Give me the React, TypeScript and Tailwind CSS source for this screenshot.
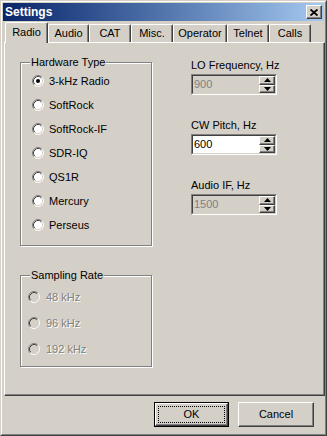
import React from "react";

const tabs = [
  { name: "Radio", w: "w-[43px]" },
  { name: "Audio", w: "w-[41px]" },
  { name: "CAT", w: "w-[42px]" },
  { name: "Misc.", w: "w-[42px]" },
  { name: "Operator", w: "w-[54px]" },
  { name: "Telnet", w: "w-[42px]" },
  { name: "Calls", w: "w-[42px]" },
];

const hardware = ["3-kHz Radio", "SoftRock", "SoftRock-IF", "SDR-IQ", "QS1R", "Mercury", "Perseus"];
const rates = ["48 kHz", "96 kHz", "192 kHz"];

// classic 3d bevels
const raised =
  "border border-t-white border-l-white border-b-[#404040] border-r-[#404040] shadow-[inset_-1px_-1px_0_#808080]";

function RadioDot({ checked, disabled }: { checked?: boolean; disabled?: boolean }) {
  return (
    <svg width="12" height="12" viewBox="0 0 12 12" className="shrink-0">
      <circle cx="6" cy="6" r="5" fill={disabled ? "#d4d0c8" : "#fff"} />
      <path d="M2.11 9.89A5.5 5.5 0 0 1 9.89 2.11" fill="none" stroke="#808080" />
      <path d="M9.89 2.11A5.5 5.5 0 0 1 2.11 9.89" fill="none" stroke="#fff" />
      <path d="M2.82 9.18A4.5 4.5 0 0 1 9.18 2.82" fill="none" stroke="#404040" />
      <path d="M9.18 2.82A4.5 4.5 0 0 1 2.82 9.18" fill="none" stroke="#d4d0c8" />
      {checked && <circle cx="6" cy="6" r="2" fill="#000" />}
    </svg>
  );
}

function Spin() {
  return (
    <div className="flex flex-col w-[16px] h-full">
      <div className={`flex-1 flex items-center justify-center bg-[#d4d0c8] ${raised}`}>
        <svg width="7" height="4" viewBox="0 0 7 4">
          <path d="M3.5 0L7 4H0z" fill="#000" />
        </svg>
      </div>
      <div className={`flex-1 flex items-center justify-center bg-[#d4d0c8] ${raised}`}>
        <svg width="7" height="4" viewBox="0 0 7 4">
          <path d="M0 0H7L3.5 4z" fill="#000" />
        </svg>
      </div>
    </div>
  );
}

function SpinBox({ label, value, disabled, first }: { label: string; value: string; disabled?: boolean; first?: boolean }) {
  return (
    <div className={first ? "flex flex-col mt-[16px]" : "flex flex-col mt-[24px]"}>
      <span className="h-[13px] leading-[13px]">{label}</span>
      <div className="mt-[2px] w-[86px] h-[21px] border border-t-[#808080] border-l-[#808080] border-b-white border-r-white">
        <div
          className={
            disabled
              ? "h-full flex border border-t-[#404040] border-l-[#404040] border-b-[#d4d0c8] border-r-[#d4d0c8] bg-[#d4d0c8] text-[#808080]"
              : "h-full flex border border-t-[#404040] border-l-[#404040] border-b-[#d4d0c8] border-r-[#d4d0c8] bg-white text-black"
          }
        >
          <span className="flex-1 pl-[1px] leading-[17px]">{value}</span>
          <Spin />
        </div>
      </div>
    </div>
  );
}

export default function App() {
  return (
    <div className="w-[327px] h-[436px] bg-[#d4d0c8] border border-t-[#d4d0c8] border-l-[#d4d0c8] border-b-[#404040] border-r-[#404040] font-['Liberation_Sans',Arial,sans-serif] text-[11px] text-black">
      <div className="h-full flex flex-col border border-t-white border-l-white border-b-[#808080] border-r-[#808080]">
        {/* Title bar */}
        <div className="mt-[1px] mx-[1px] h-[18px] flex items-center pl-[2px] pr-[2px] bg-gradient-to-r from-[#0a246a] to-[#a6caf0]">
          <span className="flex-1 text-white font-bold text-[12px] leading-[18px]">Settings</span>
          <div className={`w-[16px] h-[14px] flex items-center justify-center bg-[#d4d0c8] ${raised}`}>
            <svg width="8" height="7" viewBox="0 0 8 7">
              <path d="M0.5 0.5L7.5 6.5M7.5 0.5L0.5 6.5" stroke="#000" strokeWidth="1.8" fill="none" />
            </svg>
          </div>
        </div>

        {/* Tabs */}
        <div className="mt-[1px] h-[20px] flex items-end pl-[3px]">
          {tabs.map((t, i) =>
            i === 0 ? (
              <div
                key={t.name}
                className={`${t.w} relative z-10 h-[21px] -mb-px flex items-center justify-center pb-[1px] bg-[#d4d0c8] border-l border-t border-r border-l-white border-t-white border-r-[#404040] rounded-t-[2px] shadow-[inset_-1px_0_0_#808080]`}
              >
                {t.name}
              </div>
            ) : (
              <div
                key={t.name}
                className={`${t.w} h-[18px] flex items-center justify-center bg-[#d4d0c8] border-l border-t border-r border-l-white border-t-white border-r-[#404040] rounded-t-[2px] shadow-[inset_-1px_0_0_#808080]`}
              >
                {t.name}
              </div>
            )
          )}
        </div>

        {/* Tab panel */}
        <div className="ml-[2px] h-[354px] flex border border-t-white border-l-white border-b-[#404040] border-r-[#404040] shadow-[inset_-1px_-1px_0_#808080]">
          <div className="ml-[15px] flex flex-col">
            {/* Hardware Type */}
            <div className="mt-[19px] w-[132px] h-[184px] flex flex-col border border-[#808080] shadow-[inset_1px_1px_0_#fff,1px_1px_0_#fff]">
              <span className="-mt-[7px] ml-[9px] self-start px-[1px] bg-[#d4d0c8] leading-[13px]">Hardware Type</span>
              <div className="flex flex-col pl-[11px]">
                {hardware.map((h, i) => (
                  <div key={h} className="h-[24px] flex items-center gap-[5px]">
                    <RadioDot checked={i === 0} />
                    <span>{h}</span>
                  </div>
                ))}
              </div>
            </div>

            {/* Sampling Rate */}
            <div className="mt-[29px] w-[132px] h-[92px] flex flex-col border border-[#808080] shadow-[inset_1px_1px_0_#fff,1px_1px_0_#fff]">
              <span className="-mt-[7px] ml-[9px] self-start px-[1px] bg-[#d4d0c8] leading-[13px]">Sampling Rate</span>
              <div className="mt-[2px] flex flex-col pl-[7px]">
                {rates.map((r) => (
                  <div key={r} className="h-[26px] flex items-center gap-[6px]">
                    <RadioDot disabled />
                    <span className="text-[#808080] [text-shadow:1px_1px_0_#fff]">{r}</span>
                  </div>
                ))}
              </div>
            </div>
          </div>

          <div className="ml-[39px] flex flex-col">
            <SpinBox first label="LO Frequency, Hz" value="900" disabled />
            <SpinBox label="CW Pitch, Hz" value="600" />
            <SpinBox label="Audio IF, Hz" value="1500" disabled />
          </div>
        </div>

        {/* Buttons */}
        <div className="mt-[6px] flex justify-end gap-[9px] pr-[11px]">
          <div className="w-[75px] h-[25px] border border-black">
            <div className={`h-full p-[2px] ${raised}`}>
              <div className="h-full flex items-center justify-center border border-dotted border-black">OK</div>
            </div>
          </div>
          <div className={`w-[76px] h-[25px] flex items-center justify-center ${raised}`}>Cancel</div>
        </div>
      </div>
    </div>
  );
}
